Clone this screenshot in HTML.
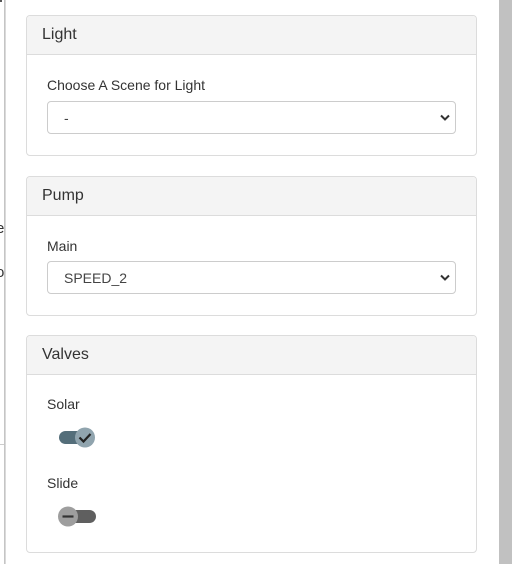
<!DOCTYPE html>
<html><head><style>
body{margin:0;width:513px;height:564px;overflow:hidden;background:#fff;font-family:"Liberation Sans",sans-serif;position:relative}
.sb{position:absolute;left:499px;top:0;width:13px;height:564px;background:#c1c1c1}
.shadow{position:absolute;left:4px;top:0;width:2px;height:564px;background:linear-gradient(90deg,#bbb,#e4e4e4)}
.frag{position:absolute;left:-4px;font-size:15px;color:#333}
.card{position:absolute;left:26px;width:449px;border:1px solid #dcdcdc;border-radius:4px;background:#fff}
.hd{height:38px;background:#f4f4f4;border-bottom:1px solid #dcdcdc;border-radius:4px 4px 0 0;font-size:16px;color:#333;line-height:38px;padding-left:15px}
.lbl{position:absolute;left:20px;font-size:14px;color:#333}
.sel{position:absolute;left:20px;width:409px;height:33px;border:1px solid #ccc;border-radius:4px;font-size:14px;color:#444;line-height:32px;box-sizing:border-box;padding-left:16px}
.sel svg{position:absolute;right:5px;top:12px}
</style></head><body>
<div class="shadow"></div>
<div class="frag" style="top:220px">e</div>
<div class="frag" style="top:264px">o</div>
<div style="position:absolute;left:0;top:444px;width:4px;height:1px;background:#ccc"></div>
<div style="position:absolute;left:0;top:0;width:2px;height:2px;background:#555"></div>
<div class="sb"></div>

<div class="card" style="top:15px;height:139px">
<div class="hd">Light</div>
<div class="lbl" style="top:61px">Choose A Scene for Light</div>
<div class="sel" style="top:85px">-<svg width="10" height="7" viewBox="0 0 10 7"><path d="M1 1.5l4 4 4-4" stroke="#333" stroke-width="2" fill="none"/></svg></div>
</div>

<div class="card" style="top:176px;height:138px">
<div class="hd">Pump</div>
<div class="lbl" style="top:61px">Main</div>
<div class="sel" style="top:84px">SPEED_2<svg width="10" height="7" viewBox="0 0 10 7"><path d="M1 1.5l4 4 4-4" stroke="#333" stroke-width="2" fill="none"/></svg></div>
</div>

<div class="card" style="top:335px;height:216px">
<div class="hd">Valves</div>
<div class="lbl" style="top:60px">Solar</div>
<svg style="position:absolute;left:32px;top:90px" width="40" height="24" viewBox="0 0 40 24">
<rect x="0" y="5" width="30" height="13" rx="6.5" fill="#546e7a"/>
<circle cx="26" cy="11.5" r="10" fill="#90a4ae"/>
<path d="M20.5 11.5l4 4 7-7.5" stroke="#222" stroke-width="2.2" fill="none"/>
</svg>
<div class="lbl" style="top:139px">Slide</div>
<svg style="position:absolute;left:30px;top:169px" width="40" height="24" viewBox="0 0 40 24">
<rect x="2" y="5" width="37" height="13" rx="6.5" fill="#5f5f5f"/>
<circle cx="11" cy="11.5" r="10" fill="#9e9e9e"/>
<path d="M5.5 11.5h11" stroke="#333" stroke-width="2.2"/>
</svg>
</div>
</body></html>
